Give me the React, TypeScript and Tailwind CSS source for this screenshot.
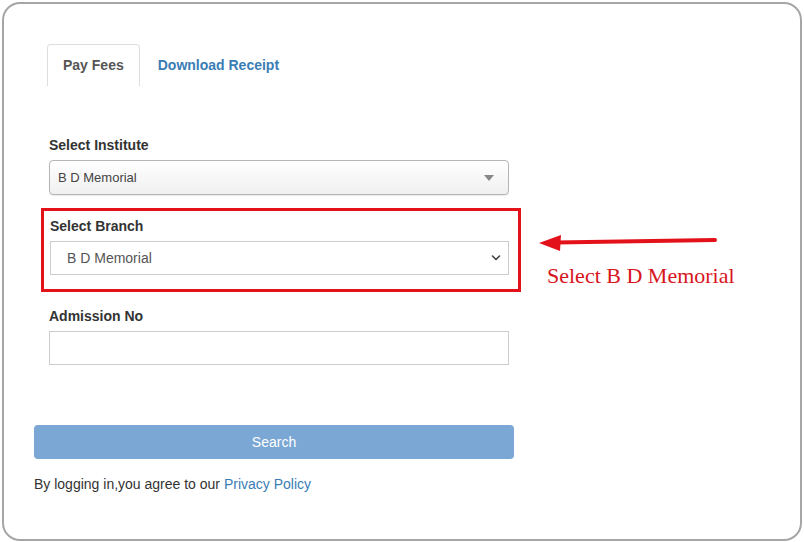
import React, { useState } from 'react';

const sans = { fontFamily: '"Liberation Sans", Arial, Helvetica, sans-serif' };

export default function App() {
  const [tab, setTab] = useState('pay');
  const [admission, setAdmission] = useState('');

  return (
    <div className="relative w-[804px] h-[542px] bg-white" style={sans}>
      <div className="absolute left-[2px] top-[2px] w-[800px] h-[539px] border-2 border-[#a6a6a6] rounded-[18px] bg-white">
        {/* tabs */}
        <div className="flex ml-[43px] mt-[40px] text-[14px] font-bold leading-[20px]">
          <button
            onClick={() => setTab('pay')}
            className="h-[42px] px-[15px] pb-[2px] border border-[#dddddd] border-b-0 rounded-t-[4px] text-[#555555]"
          >
            Pay Fees
          </button>
          <button
            onClick={() => setTab('receipt')}
            className="h-[42px] px-[18px] text-[#3a7db5]"
          >
            Download Receipt
          </button>
        </div>

        {/* form */}
        <div className="ml-[45px] w-[460px] mt-[49px] flex flex-col">
          <label className="text-[14px] font-bold leading-[20px] text-[#333333]">Select Institute</label>
          <div className="mt-[5px] h-[35px] flex items-center justify-between px-[8px] border border-[#b5b5b5] rounded-[4px] bg-gradient-to-b from-white to-[#f0f0f0] shadow-[0_1px_1px_rgba(0,0,0,0.08)]">
            <span className="text-[13px] text-[#444444]">B D Memorial</span>
            <svg width="10" height="6" viewBox="0 0 10 6" className="mr-[6px]">
              <path d="M0 0 L10 0 L5 6 Z" fill="#888888" />
            </svg>
          </div>

          <div className="mt-[13px] -ml-[8px] -mr-[12px] border-[3px] border-[#e3121a] pt-[5px] pb-[14px] pl-[6px] pr-[9px]">
            <label className="block text-[14px] font-bold leading-[20px] text-[#333333]">Select Branch</label>
            <div className="mt-[5px] h-[34px] flex items-center justify-between pl-[16px] pr-[6px] border border-[#cccccc] bg-white">
              <span className="text-[14px] text-[#555555]">B D Memorial</span>
              <svg width="12" height="8" viewBox="0 0 12 8">
                <path d="M2.5 2 L6 5.5 L9.5 2" fill="none" stroke="#444444" strokeWidth="1.6" strokeLinecap="round" strokeLinejoin="round" />
              </svg>
            </div>
          </div>

          <label className="mt-[14px] text-[14px] font-bold leading-[20px] text-[#333333]">Admission No</label>
          <input
            value={admission}
            onChange={(e) => setAdmission(e.target.value)}
            className="mt-[5px] h-[34px] border border-[#cccccc] px-[12px] text-[14px] outline-none"
          />

          <button className="mt-[60px] -ml-[15px] w-[480px] h-[34px] rounded-[4px] bg-[#7aa7d4] text-white text-[14px]">
            Search
          </button>

          <p className="mt-[15px] -ml-[15px] text-[14px] leading-[20px] text-[#333333]">
            By logging in,you agree to our <a className="text-[#3a7db5]">Privacy Policy</a>
          </p>
        </div>
      </div>

      {/* annotation */}
      <svg className="absolute left-0 top-0" width="804" height="542" viewBox="0 0 804 542">
        <line x1="556" y1="242.5" x2="715" y2="240" stroke="#e3121a" strokeWidth="4" strokeLinecap="round" />
        <path d="M539 243 L561 235 L560 251 Z" fill="#e3121a" />
      </svg>
      <div
        className="absolute left-[547px] top-[262px] text-[22px] leading-[28px] text-[#d8141c]"
        style={{ fontFamily: '"Liberation Serif", "Times New Roman", serif' }}
      >
        Select B D Memorial
      </div>
    </div>
  );
}
